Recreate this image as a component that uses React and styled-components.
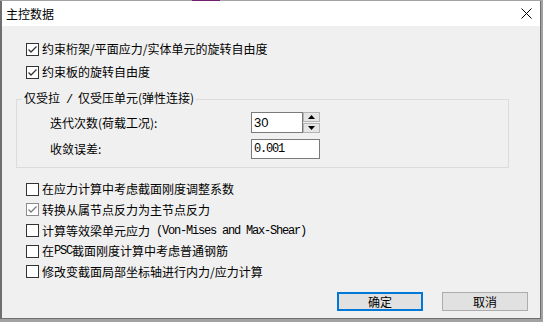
import React from "react";
import styled, { createGlobalStyle } from "styled-components";

const GlobalStyle = createGlobalStyle`
  html, body { margin: 0; padding: 0; background: #a2a2a2; }
  body {
    font-family: "Noto Sans CJK SC", "Noto Sans", sans-serif;
    font-size: 12px;
    color: #000;
  }
`;

const Page = styled.div`
  width: 543px;
  height: 322px;
  overflow: hidden;
`;

const TopStrip = styled.div`
  height: 1px;
  display: flex;
`;

const Purple = styled.div`
  margin-left: 192px;
  width: 28px;
  background: #6e1f6e;
`;

const Window = styled.div`
  width: 541px;
  height: 318px;
  box-sizing: border-box;
  border: 1px solid #6f6f6f;
  border-top: none;
  border-left-width: 2px;
  display: flex;
  flex-direction: column;
`;

const TitleBar = styled.div`
  height: 25px;
  flex: none;
  background: #fff;
  display: flex;
  align-items: center;
  justify-content: space-between;
  padding: 0 8px 0 4px;
  font-size: 12px;
  line-height: 14px;
`;

const Body = styled.div`
  flex: 1;
  background: #f0f0f0;
  display: flex;
  flex-direction: column;
  padding: 12px 0 0 14px;
`;

const List = styled.div`
  display: flex;
  flex-direction: column;
  gap: ${(p) => p.$gap || 0}px;
  margin-top: ${(p) => p.$top || 0}px;
`;

const Row = styled.label`
  display: flex;
  align-items: center;
  height: ${(p) => p.$h}px;
  padding-left: 10px;
  line-height: 14px;
  white-space: nowrap;
  color: #000;
`;

const Box = styled.span`
  width: 13px;
  height: 13px;
  box-sizing: border-box;
  border: 1px solid ${(p) => (p.$muted ? "#8c8c8c" : "#333")};
  background: #fff;
  flex: none;
  display: flex;
  align-items: center;
  justify-content: center;
  margin-right: 3px;
`;

const Mono = styled.span`
  font-family: "Liberation Mono", monospace;
  font-size: 12px;
  letter-spacing: -1.2px;
  white-space: pre;
`;

const Group = styled.fieldset`
  margin: 8px 0 0 0;
  width: 493px;
  box-sizing: border-box;
  border: 1px solid #dcdcdc;
  padding: 5px 0 8px 33px;
  min-inline-size: 0;
`;

const Legend = styled.legend`
  padding: 0 2px;
  margin-left: -28px;
  line-height: 14px;
  font-size: 12px;
  white-space: pre;
`;

const FormGrid = styled.div`
  display: grid;
  grid-template-columns: 201px auto;
  row-gap: 6px;
  align-items: center;
`;

const FieldLabel = styled.span`
  line-height: 14px;
`;

const Field = styled.div`
  display: flex;
`;

const TextBox = styled.div`
  width: ${(p) => p.$w}px;
  height: ${(p) => p.$h}px;
  box-sizing: border-box;
  border: 1px solid #7a7a7a;
  background: #fff;
  display: flex;
  align-items: center;
  padding-left: 2px;
  font-family: ${(p) => (p.$mono ? '"Liberation Mono", monospace' : '"Liberation Sans", Arial, sans-serif')};
  font-size: ${(p) => (p.$mono ? 12 : 13)}px;
  letter-spacing: ${(p) => (p.$mono ? "-1.2px" : "0")};
`;

const Spinner = styled.div`
  display: flex;
  flex-direction: column;
  gap: 1px;
  width: 17px;
`;

const SpinBtn = styled.div`
  height: 10px;
  box-sizing: border-box;
  border: 1px solid #b4b4b4;
  background: #e5e5e5;
  display: flex;
  align-items: center;
  justify-content: center;
`;

const ButtonRow = styled.div`
  display: flex;
  justify-content: flex-end;
  gap: 19px;
  margin-top: 10px;
  padding-right: 12px;
`;

const Button = styled.div`
  width: 86px;
  height: 19px;
  box-sizing: border-box;
  background: #e1e1e1;
  border: ${(p) => (p.$primary ? "2px solid #0078d7" : "1px solid #adadad")};
  display: flex;
  align-items: center;
  justify-content: center;
  font-size: 12px;
  line-height: 14px;
`;

const Check = ({ checked, muted }) => (
  <Box $muted={muted}>
    {checked && (
      <svg width="11" height="11" viewBox="0 0 11 11">
        <polyline
          points="1.5,5.5 4,8 9.5,2.5"
          fill="none"
          stroke={muted ? "#7a7a7a" : "#333"}
          strokeWidth="1.3"
        />
      </svg>
    )}
  </Box>
);

const CloseIcon = () => (
  <svg width="11" height="11" viewBox="0 0 11 11">
    <path d="M0.5 0.5 L10.5 10.5 M10.5 0.5 L0.5 10.5" stroke="#000" strokeWidth="1" />
  </svg>
);

const Arrow = ({ up }) => (
  <svg width="7" height="4" viewBox="0 0 7 4">
    <polygon points={up ? "3.5,0 7,4 0,4" : "0,0 7,0 3.5,4"} fill="#000" />
  </svg>
);

export default function App() {
  return (
    <Page>
      <GlobalStyle />
      <TopStrip>
        <Purple />
      </TopStrip>
      <Window>
        <TitleBar>
          <span>主控数据</span>
          <CloseIcon />
        </TitleBar>
        <Body>
          <List $gap={1}>
            <Row $h={22}>
              <Check checked />
              约束桁架/平面应力/实体单元的旋转自由度
            </Row>
            <Row $h={22}>
              <Check checked />
              约束板的旋转自由度
            </Row>
          </List>
          <Group>
            <Legend>
              仅受拉<Mono> / </Mono>仅受压单元(弹性连接)
            </Legend>
            <FormGrid>
              <FieldLabel>迭代次数(荷载工况):</FieldLabel>
              <Field>
                <TextBox $w={52} $h={21}>30</TextBox>
                <Spinner>
                  <SpinBtn>
                    <Arrow up />
                  </SpinBtn>
                  <SpinBtn>
                    <Arrow />
                  </SpinBtn>
                </Spinner>
              </Field>
              <FieldLabel>收敛误差:</FieldLabel>
              <Field>
                <TextBox $w={69} $h={20} $mono>
                  0.001
                </TextBox>
              </Field>
            </FormGrid>
          </Group>
          <List $top={11}>
            <Row $h={20.67}>
              <Check />
              在应力计算中考虑截面刚度调整系数
            </Row>
            <Row $h={20.67}>
              <Check checked muted />
              转换从属节点反力为主节点反力
            </Row>
            <Row $h={20.67}>
              <Check />
              计算等效梁单元应力<Mono> (Von-Mises and Max-Shear)</Mono>
            </Row>
            <Row $h={20.67}>
              <Check />
              在<Mono>PSC</Mono>截面刚度计算中考虑普通钢筋
            </Row>
            <Row $h={20.67}>
              <Check />
              修改变截面局部坐标轴进行内力/应力计算
            </Row>
          </List>
          <ButtonRow>
            <Button $primary>确定</Button>
            <Button>取消</Button>
          </ButtonRow>
        </Body>
      </Window>
    </Page>
  );
}
